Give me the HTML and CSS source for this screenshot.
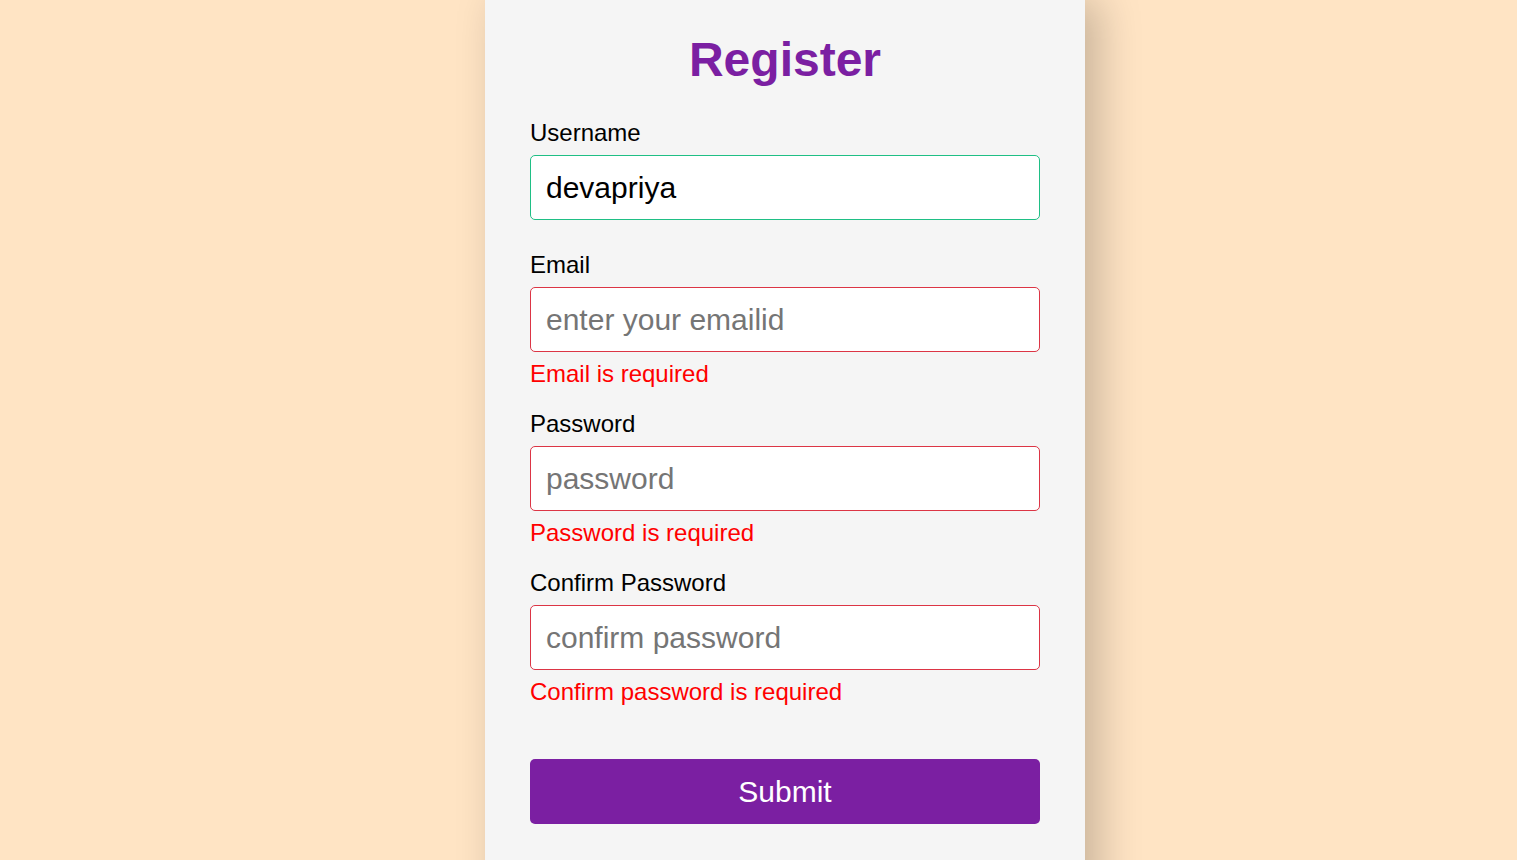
FILE: index.html
```html
<!DOCTYPE html>
<html lang="en">
<head>
<meta charset="utf-8">
<title>Register</title>
<link rel="stylesheet" href="styles.css">
</head>
<body>
<div class="page">
  <div class="card">
    <h1 class="title">Register</h1>
    <form class="form">
      <div class="field">
        <label class="label">Username</label>
        <input class="input valid" type="text" value="devapriya">
      </div>
      <div class="field">
        <label class="label">Email</label>
        <input class="input invalid" type="email" placeholder="enter your emailid">
        <div class="error">Email is required</div>
      </div>
      <div class="field">
        <label class="label">Password</label>
        <input class="input invalid" type="password" placeholder="password">
        <div class="error">Password is required</div>
      </div>
      <div class="field last">
        <label class="label">Confirm Password</label>
        <input class="input invalid" type="password" placeholder="confirm password">
        <div class="error">Confirm password is required</div>
      </div>
      <button class="submit" type="button">Submit</button>
    </form>
  </div>
</div>
</body>
</html>
```
FILE: styles.css
```css
html, body {
  margin: 0;
  padding: 0;
}
body {
  background: #ffe4c4;
  font-family: "Liberation Sans", Arial, sans-serif;
  overflow: hidden;
}
.page {
  padding-left: 53px;
}
.card {
  width: 510px;
  margin: 0 auto;
  padding: 1px 45px 45px;
  min-height: 100vh;
  background: #f5f5f5;
  box-shadow: 14px 0 40px rgba(0, 0, 0, 0.22);
}
.title {
  margin: 31px 0 32px;
  text-align: center;
  font-size: 48px;
  font-weight: bold;
  color: #7b1fa2;
}
.form {
  display: flex;
  flex-direction: column;
}
.field {
  display: flex;
  flex-direction: column;
  margin-bottom: 23px;
}
.field.last {
  margin-bottom: 24px;
}
.label {
  font-size: 24px;
  color: #000;
  margin-bottom: 8px;
}
.input {
  box-sizing: border-box;
  width: 100%;
  height: 65px;
  padding: 0 15px;
  font-family: "Liberation Sans", Arial, sans-serif;
  font-size: 30px;
  color: #000;
  background: #fff;
  border: 1px solid #ccc;
  border-radius: 5px;
  outline: none;
  margin-bottom: 8px;
}
.input::placeholder {
  color: #757575;
}
.input.valid {
  border-color: #1fbf85;
}
.input.invalid {
  border-color: #dc3545;
}
.error {
  font-size: 24px;
  line-height: 27px;
  color: #ff0000;
}
.submit {
  margin-top: 30px;
  height: 65px;
  width: 100%;
  border: none;
  border-radius: 5px;
  background: #7b1fa2;
  color: #fff;
  font-family: "Liberation Sans", Arial, sans-serif;
  font-size: 30px;
  cursor: pointer;
}
```
